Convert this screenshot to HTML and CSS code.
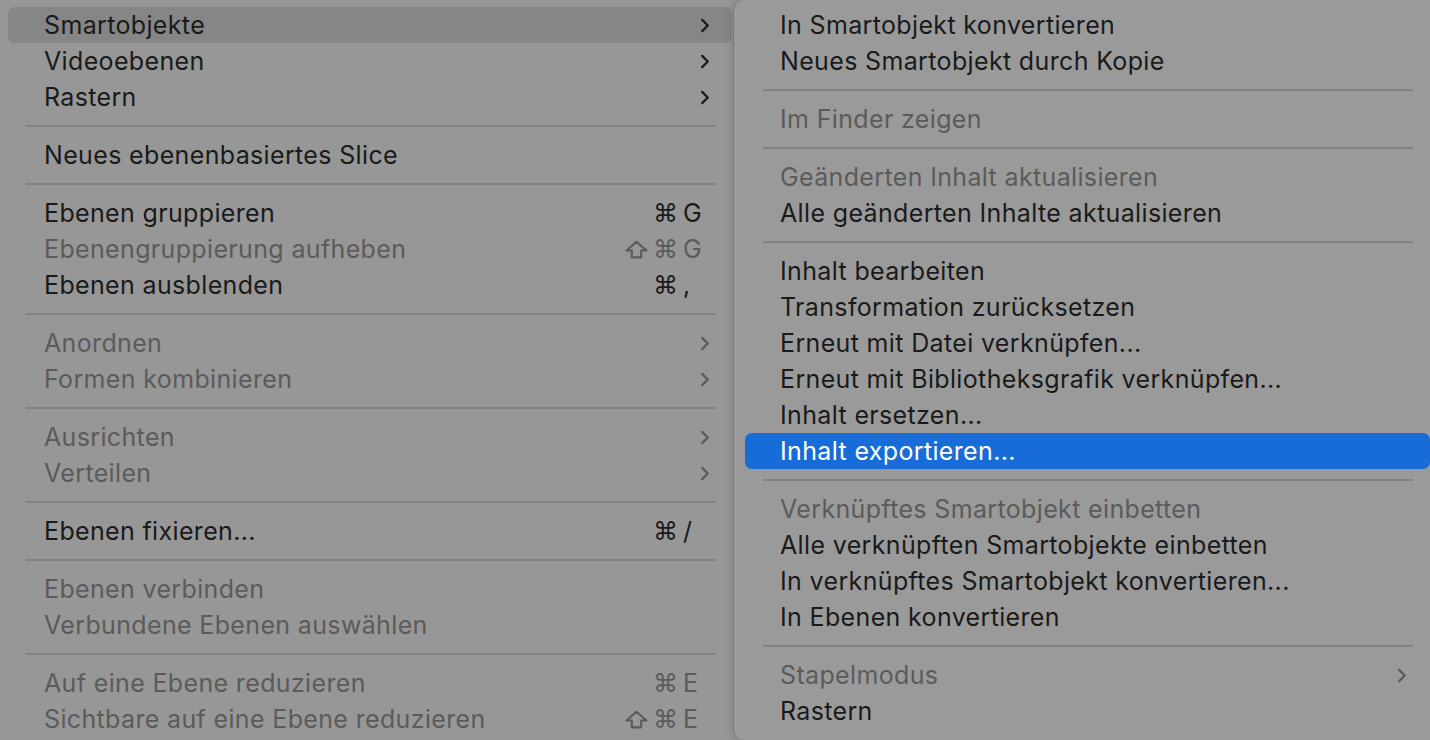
FILE: index.html
```html
<!DOCTYPE html>
<html lang="de">
<head>
<meta charset="utf-8">
<title>Menü</title>
<link rel="stylesheet" href="styles.css">
</head>
<body>
<div class="screen">
  <div class="menu main">
    <div class="item active"><span class="label">Smartobjekte</span><svg class="chev" viewBox="0 0 10 16"><polyline points="2,2 8,8 2,14"/></svg></div>
    <div class="item"><span class="label">Videoebenen</span><svg class="chev" viewBox="0 0 10 16"><polyline points="2,2 8,8 2,14"/></svg></div>
    <div class="item"><span class="label">Rastern</span><svg class="chev" viewBox="0 0 10 16"><polyline points="2,2 8,8 2,14"/></svg></div>
    <div class="sep"></div>
    <div class="item"><span class="label">Neues ebenenbasiertes Slice</span></div>
    <div class="sep"></div>
    <div class="item"><span class="label">Ebenen gruppieren</span><span class="keys"><span class="mods"><span class="cmd">⌘</span></span><span class="key">G</span></span></div>
    <div class="item off"><span class="label">Ebenengruppierung aufheben</span><span class="keys"><span class="mods"><svg class="shift" viewBox="0 0 22 18"><path d="M11 1.5 L20.5 10 H15.5 V16.5 H6.5 V10 H1.5 Z"/></svg><span class="cmd">⌘</span></span><span class="key">G</span></span></div>
    <div class="item"><span class="label">Ebenen ausblenden</span><span class="keys"><span class="mods"><span class="cmd">⌘</span></span><span class="key">,</span></span></div>
    <div class="sep"></div>
    <div class="item off"><span class="label">Anordnen</span><svg class="chev" viewBox="0 0 10 16"><polyline points="2,2 8,8 2,14"/></svg></div>
    <div class="item off"><span class="label">Formen kombinieren</span><svg class="chev" viewBox="0 0 10 16"><polyline points="2,2 8,8 2,14"/></svg></div>
    <div class="sep"></div>
    <div class="item off"><span class="label">Ausrichten</span><svg class="chev" viewBox="0 0 10 16"><polyline points="2,2 8,8 2,14"/></svg></div>
    <div class="item off"><span class="label">Verteilen</span><svg class="chev" viewBox="0 0 10 16"><polyline points="2,2 8,8 2,14"/></svg></div>
    <div class="sep"></div>
    <div class="item"><span class="label">Ebenen fixieren...</span><span class="keys"><span class="mods"><span class="cmd">⌘</span></span><span class="key">/</span></span></div>
    <div class="sep"></div>
    <div class="item off"><span class="label">Ebenen verbinden</span></div>
    <div class="item off"><span class="label">Verbundene Ebenen auswählen</span></div>
    <div class="sep"></div>
    <div class="item off"><span class="label">Auf eine Ebene reduzieren</span><span class="keys"><span class="mods"><span class="cmd">⌘</span></span><span class="key">E</span></span></div>
    <div class="item off"><span class="label">Sichtbare auf eine Ebene reduzieren</span><span class="keys"><span class="mods"><svg class="shift" viewBox="0 0 22 18"><path d="M11 1.5 L20.5 10 H15.5 V16.5 H6.5 V10 H1.5 Z"/></svg><span class="cmd">⌘</span></span><span class="key">E</span></span></div>
  </div>
  <div class="menu sub">
    <div class="item"><span class="label">In Smartobjekt konvertieren</span></div>
    <div class="item"><span class="label">Neues Smartobjekt durch Kopie</span></div>
    <div class="sep"></div>
    <div class="item off"><span class="label">Im Finder zeigen</span></div>
    <div class="sep"></div>
    <div class="item off"><span class="label">Geänderten Inhalt aktualisieren</span></div>
    <div class="item"><span class="label">Alle geänderten Inhalte aktualisieren</span></div>
    <div class="sep"></div>
    <div class="item"><span class="label">Inhalt bearbeiten</span></div>
    <div class="item"><span class="label">Transformation zurücksetzen</span></div>
    <div class="item"><span class="label">Erneut mit Datei verknüpfen...</span></div>
    <div class="item"><span class="label">Erneut mit Bibliotheksgrafik verknüpfen...</span></div>
    <div class="item"><span class="label">Inhalt ersetzen...</span></div>
    <div class="item selected"><span class="label">Inhalt exportieren...</span></div>
    <div class="sep"></div>
    <div class="item off"><span class="label">Verknüpftes Smartobjekt einbetten</span></div>
    <div class="item"><span class="label">Alle verknüpften Smartobjekte einbetten</span></div>
    <div class="item"><span class="label">In verknüpftes Smartobjekt konvertieren...</span></div>
    <div class="item"><span class="label">In Ebenen konvertieren</span></div>
    <div class="sep"></div>
    <div class="item off"><span class="label">Stapelmodus</span><svg class="chev" viewBox="0 0 10 16"><polyline points="2,2 8,8 2,14"/></svg></div>
    <div class="item"><span class="label">Rastern</span></div>
  </div>
</div>
</body>
</html>
```

FILE: styles.css
```css
* { box-sizing: border-box; }
html, body {
  margin: 0;
  padding: 0;
  width: 1430px;
  height: 740px;
  overflow: hidden;
  background: #979797;
}
.screen {
  display: flex;
  width: 1430px;
  height: 740px;
  overflow: hidden;
  font-family: Inter, "Open Sans", "DejaVu Sans", sans-serif;
  font-size: 25px;
  color: #1a1a1a;
}
.menu {
  display: flex;
  flex-direction: column;
  padding-top: 7px;
}
.main {
  width: 734px;
  flex: none;
  padding-left: 8px;
  padding-right: 2px;
  background: #979797;
}
.sub {
  width: 700px;
  flex: none;
  height: 740px;
  padding-left: 11px;
  padding-right: 4px;
  background: #9a9a9a;
  border-radius: 10px 0 0 10px;
  box-shadow: -1px 0 0 rgba(0, 0, 0, 0.12), -3px 0 8px rgba(0, 0, 0, 0.12);
  position: relative;
}
.item {
  height: 36px;
  display: flex;
  align-items: center;
  padding-left: 36px;
  border-radius: 7px;
  white-space: nowrap;
  position: relative;
}
.sub .item { padding-left: 35px; }
.label { flex: none; letter-spacing: 0.35px; }
.item.off { color: #5b5b5b; }
.item.active { background: #868686; }
.item.selected { background: #176cd7; color: #ffffff; }
.sep {
  height: 22px;
  display: flex;
  align-items: center;
  padding: 0 16px 0 18px;
}
.sep::before {
  content: "";
  display: block;
  width: 100%;
  height: 2px;
  background: #828282;
}
.sub .sep { padding: 0 17px 0 18px; }
.chev {
  position: absolute;
  left: 692px;
  top: 11px;
  width: 10px;
  height: 15px;
  fill: none;
  stroke: #1a1a1a;
  stroke-width: 2.4;
  stroke-linecap: round;
  stroke-linejoin: round;
}
.sub .chev { left: 652px; }
.item.off .chev { stroke: #5b5b5b; }
.keys {
  position: absolute;
  left: 590px;
  top: 0;
  height: 36px;
  display: flex;
  align-items: center;
}
.mods {
  width: 80px;
  display: flex;
  justify-content: flex-end;
  align-items: center;
  gap: 5px;
}
.cmd {
  font-family: "DejaVu Sans", sans-serif;
  font-size: 25px;
  line-height: 1;
}
.shift {
  width: 23px;
  height: 19px;
  fill: none;
  stroke: #5b5b5b;
  stroke-width: 2;
  stroke-linejoin: round;
}
.key {
  margin-left: 5px;
  font-size: 25px;
}
```
